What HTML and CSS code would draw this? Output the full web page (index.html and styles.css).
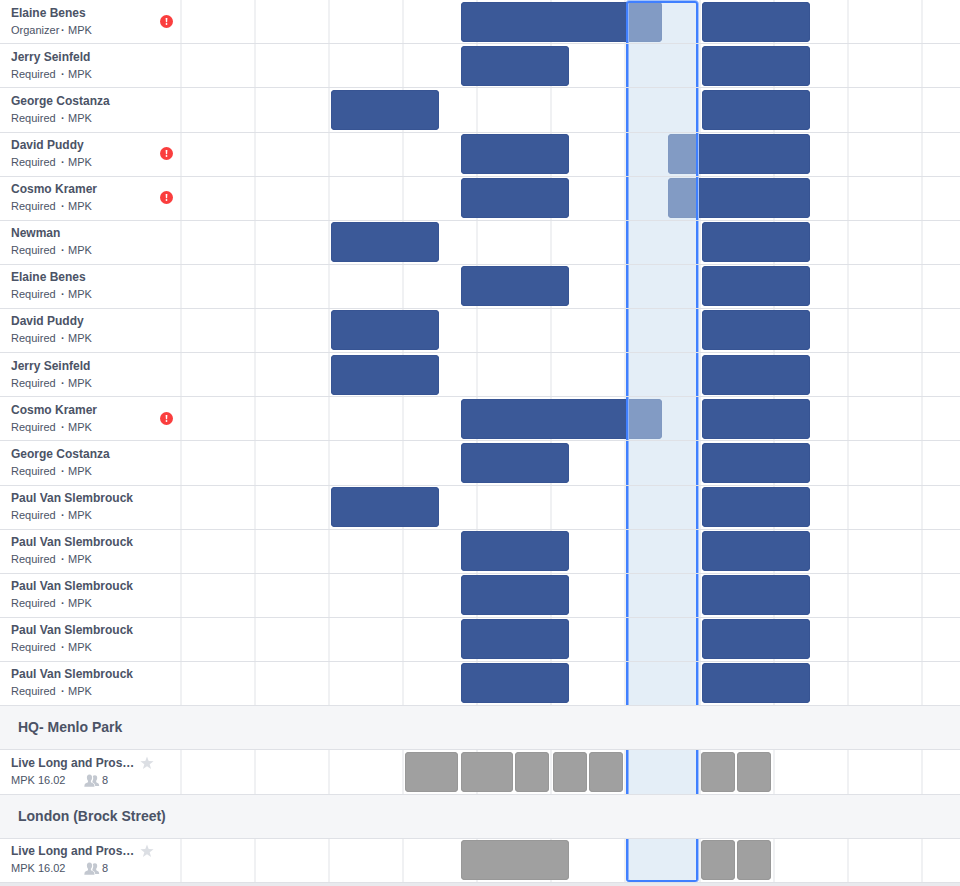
FILE: index.html
```html
<!DOCTYPE html>
<html lang="en">
<head>
<meta charset="utf-8">
<title>Scheduling assistant</title>
<link rel="stylesheet" href="styles.css">
</head>
<body>
<main class="schedule" id="schedule"></main>
<script src="app.js"></script>
</body>
</html>
```
FILE: styles.css
```css
* { box-sizing: border-box; }

body {
  margin: 0;
  background: #e9eaee;
  color: #4b5366;
  font-family: "Liberation Sans", Arial, sans-serif;
}

.schedule {
  overflow: hidden;
  background: #fff;
}

.row {
  display: flex;
  height: 44px;
  border-bottom: 1px solid #dfe1e6;
}

.group-roomy .row:last-child { height: 45px; }

.label {
  flex: none;
  display: flex;
  justify-content: space-between;
  width: 180px;
  padding: 0 7px 0 11px;
}

.group-roomy .label { padding-top: 2px; }
.group-snug .label { padding-top: 1px; }

.name {
  margin: 0;
  font-size: 12px;
  font-weight: bold;
  line-height: 22px;
  white-space: nowrap;
}

.detail {
  display: flex;
  margin: 0;
  font-size: 11px;
  line-height: 12px;
  white-space: nowrap;
}

.role { width: 50px; }
.dot { width: 7px; font-weight: bold; }
.room-code { width: 73px; }

.alert {
  width: 13px;
  height: 13px;
  margin-top: 13px;
}

.star {
  width: 14px;
  height: 14px;
  margin: 4px 19px 0 0;
}

.people-icon {
  width: 16px;
  height: 13px;
  margin-right: 2px;
}

.timeline {
  flex: 1;
  display: grid;
  grid-template-rows: 100%;
  min-width: 0;
  background-image:
    repeating-linear-gradient(to right, #f0f1f3 0 2px, transparent 2px 74px),
    repeating-linear-gradient(to right, #f0f1f3 0 2px, transparent 2px 74px);
  background-position: 0 0, 519px 0;
  background-size: 518px 100%, 2960px 100%;
  background-repeat: no-repeat;
}

.people .timeline {
  grid-template-columns:
    151px [early] 108px [early-end] 22px [mid] 108px [mid-end] 57px [slot] 36px [long-end]
    6px [clash] 30px [slot-end] 4px [late] 108px [late-end];
}

.rooms .timeline {
  grid-template-columns:
    225px [a] 53px [a-end] 3px [b] 52px [b-end] 2px [c] 34px [c-end] 4px [d] 16px [b-long-end] 18px [d-end]
    2px [e] 34px [e-end] 3px [slot] 72px [slot-end] 3px [f] 34px [f-end] 2px [g] 34px [g-end];
}

.event {
  grid-row: 1;
  height: 40px;
  border-radius: 4px;
  background: #3b5998;
  box-shadow: inset 0 0 0 1px #375493;
}

.rooms .event {
  background: #a0a0a0;
  box-shadow: inset 0 0 0 1px #989898;
}

.group-roomy .event { margin-top: 2px; }
.group-snug .event { margin-top: 1px; }

.early { grid-column: early / early-end; }
.mid { grid-column: mid / mid-end; }
.long { grid-column: mid / long-end; }
.late { grid-column: late / late-end; }
.clash { grid-column: clash / late-end; }
.a { grid-column: a / a-end; }
.b { grid-column: b / b-end; }
.c { grid-column: c / c-end; }
.d { grid-column: d / d-end; }
.e { grid-column: e / e-end; }
.f { grid-column: f / f-end; }
.g { grid-column: g / g-end; }
.b-long { grid-column: b / b-long-end; }

.slot {
  grid-row: 1;
  grid-column: slot / slot-end;
  border: 0 solid #4080ff;
  border-width: 0 2px;
  background: rgba(201, 221, 240, 0.5);
  background-clip: padding-box;
  box-shadow: 1px 0 #a3c2fb, inset 1px 0 #91b5fa;
}

.slot-first {
  margin-top: 1px;
  border-top-width: 2px;
  border-radius: 3px 3px 0 0;
  box-shadow: 1px 0 #a3c2fb, 0 -1px #a3c2fb, inset 1px 0 #91b5fa;
}

.slot-last {
  border-bottom-width: 2px;
  border-radius: 0 0 3px 3px;
}

.site {
  height: 44px;
  margin: 0;
  padding-left: 18px;
  border-bottom: 1px solid #dfe1e6;
  background: #f5f6f8;
  font-size: 14px;
  font-weight: bold;
  line-height: 43px;
}
```
FILE: app.js
```js
const people = [
  ["group-roomy", [
    ["Elaine Benes", "Organizer", true, "long late"],
    ["Jerry Seinfeld", "Required", false, "mid late"],
    ["George Costanza", "Required", false, "early late"]]],
  ["group-snug", [
    ["David Puddy", "Required", true, "mid clash"],
    ["Cosmo Kramer", "Required", true, "mid clash"],
    ["Newman", "Required", false, "early late"],
    ["Elaine Benes", "Required", false, "mid late"],
    ["David Puddy", "Required", false, "early late"]]],
  ["group-roomy", [
    ["Jerry Seinfeld", "Required", false, "early late"],
    ["Cosmo Kramer", "Required", true, "long late"],
    ["George Costanza", "Required", false, "mid late"]]],
  ["group-snug", [
    ["Paul Van Slembrouck", "Required", false, "early late"],
    ["Paul Van Slembrouck", "Required", false, "mid late"],
    ["Paul Van Slembrouck", "Required", false, "mid late"],
    ["Paul Van Slembrouck", "Required", false, "mid late"],
    ["Paul Van Slembrouck", "Required", false, "mid late"]]]
];

const sites = [
  ["HQ- Menlo Park", "group-roomy", "a b c d e f g", ""],
  ["London (Brock Street)", "group-snug", "b-long f g", "slot-last"]
];

const alertIcon = `<svg class="alert" viewBox="0 0 13 13" role="img" aria-label="Conflict">
  <circle cx="6.5" cy="6.5" r="6.5" fill="#fa3e3e"/>
  <path d="M5.6 3h1.800l-.3 4.300H5.900z" fill="#fff"/><circle cx="6.5" cy="9" r=".9" fill="#fff"/></svg>`;

const starIcon = `<svg class="star" viewBox="0 0 14 14" aria-hidden="true">
  <path d="M7 .5l1.700 4.500 4.900.2-3.900 3.100 1.400 4.700L7 10.300l-4.100 2.700 1.400-4.700L.4 5.200l4.900-.2z" fill="#dcdfe4"/></svg>`;

const peopleIcon = `<svg class="people-icon" viewBox="0 0 16 13" aria-hidden="true" fill="#c3c8d0">
  <path d="M5.500.4C7.400.4 8.200 1.900 8.100 3.700 8 5.200 7.400 6.200 6.900 6.700v1.300c0 .7 3 1.100 3.300 2.700l.3 2.100H.3l.3-2.100C.9 9.100 4 8.700 4 8V6.700C3.500 6.200 3 5.200 2.900 3.700 2.800 1.900 3.600.4 5.500.4z"/>
  <path d="M10.900 1.200c1.700 0 2.400 1.300 2.300 2.900-.1 1.300-.6 2.200-1 2.600v1.200c0 .6 2.500 1 2.800 2.500l.2 1.500h-4c-.2-2-1-2.700-2.800-3.500V7.200c.9-1.300 1.100-3.500.4-5.200.5-.5 1.200-.8 2.100-.8z"/></svg>`;

const timeline = (events, edge) => `<div class="timeline">
  ${events.split(" ").map(e => `<div class="event ${e}"></div>`).join("")}
  <div class="slot ${edge}"></div></div>`;

const personRow = ([name, role, conflict, events], first) => `<div class="row">
  <div class="label"><div><p class="name">${name}</p>
  <p class="detail"><span class="role">${role}</span><span class="dot">·</span><span>MPK</span></p></div>
  ${conflict ? alertIcon : ""}</div>${timeline(events, first ? "slot-first" : "")}</div>`;

const peopleHtml = people.map(([group, rows], g) =>
  `<div class="${group}">${rows.map((r, i) => personRow(r, g + i === 0)).join("")}</div>`).join("");

const sitesHtml = sites.map(([site, group, events, edge]) => `<h2 class="site">${site}</h2>
  <div class="${group}"><div class="row"><div class="label"><div><p class="name">Live Long and Pros…</p>
  <p class="detail"><span class="room-code">MPK 16.02</span>${peopleIcon}<span>8</span></p></div>
  ${starIcon}</div>${timeline(events, edge)}</div></div>`).join("");

document.getElementById("schedule").innerHTML =
  `<section class="people">${peopleHtml}</section><section class="rooms">${sitesHtml}</section>`;
```
